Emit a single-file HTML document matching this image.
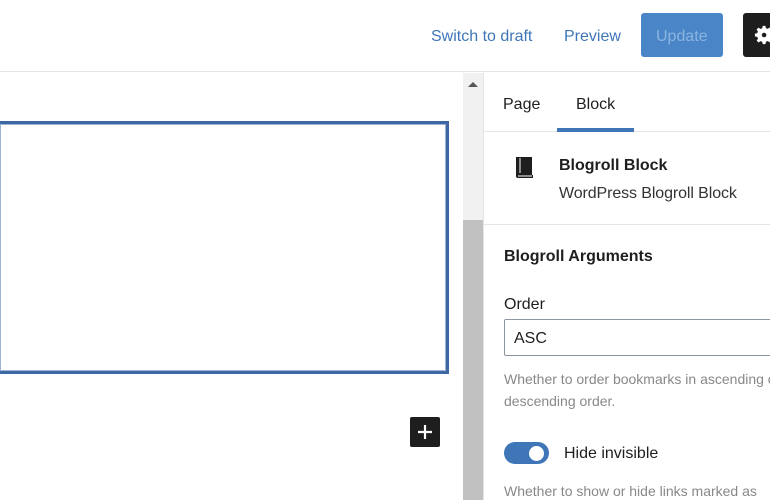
<!DOCTYPE html><html><head><style>
body{margin:0;width:770px;height:500px;overflow:hidden;background:#fff;font-family:"Liberation Sans",sans-serif;position:relative}
div,span{position:absolute;box-sizing:border-box}
.t{white-space:nowrap}
</style></head><body>
<div style="left:0;top:0;width:770px;height:72px;border-bottom:1px solid #e2e4e7"></div>
<span class="t" style="left:431px;top:28px;font-size:16px;color:#3f76b8">Switch to draft</span>
<span class="t" style="left:564px;top:28px;font-size:16px;color:#3f76b8">Preview</span>
<div style="left:641px;top:13px;width:82px;height:44px;background:#4a86c7;border-radius:3px"></div>
<span class="t" style="left:656px;top:28px;font-size:16px;color:#8ab4e0">Update</span>
<div style="left:743px;top:13px;width:40px;height:44px;background:#1e1e1e;border-radius:3px"></div>
<svg style="position:absolute;left:754px;top:24px" width="22" height="22" viewBox="0 0 24 24"><path fill="#fff" d="M12 8a4 4 0 1 0 0 8 4 4 0 0 0 0-8zm9 5.5v-3l-2.6-.5a7 7 0 0 0-.8-1.900l1.5-2.2-2.1-2.1-2.2 1.5a7 7 0 0 0-1.9-.8L12.5 2h-3l-.5 2.6a7 7 0 0 0-1.9.8L4.9 3.9 2.8 6l1.5 2.2a7 7 0 0 0-.8 1.9L1 10.5v3l2.6.5a7 7 0 0 0 .8 1.9l-1.5 2.2 2.1 2.1 2.2-1.5a7 7 0 0 0 1.9.8l.4 2.5h3l.5-2.6a7 7 0 0 0 1.9-.8l2.2 1.5 2.1-2.1-1.5-2.2a7 7 0 0 0 .8-1.9z"/><circle cx="11" cy="12" r="2.5" fill="#1e1e1e"/></svg>
<div style="left:-3px;top:121px;width:452px;height:253px;border:3px solid #3d68a4;box-shadow:inset 0 0 0 1px #9db3d3"></div>
<div style="left:410px;top:417px;width:30px;height:30px;background:#1e1e1e;border-radius:2px;display:flex;align-items:center;justify-content:center"><svg width="18" height="18" viewBox="0 0 18 18"><path d="M9 2v14M2 9h14" stroke="#fff" stroke-width="2.2"/></svg></div>
<div style="left:463px;top:73px;width:20px;height:427px;background:#f1f1f1"></div>
<div style="left:463px;top:220px;width:20px;height:280px;background:#c1c1c1"></div>
<div style="left:468px;top:82px;width:0;height:0;border-left:5px solid transparent;border-right:5px solid transparent;border-bottom:5px solid #555"></div>
<div style="left:483px;top:73px;width:1px;height:427px;background:#e2e4e7"></div>
<div style="left:484px;top:131px;width:286px;height:1px;background:#e2e4e7"></div>
<span class="t" style="left:503px;top:96px;font-size:16px;color:#1e1e1e">Page</span>
<span class="t" style="left:576px;top:96px;font-size:16px;color:#1e1e1e">Block</span>
<div style="left:557px;top:128px;width:77px;height:4px;background:#3f76b8"></div>
<svg style="position:absolute;left:513px;top:156px" width="22" height="24" viewBox="0 0 22 24"><path fill="#1e1e1e" d="M3 1h16v18H3z"/><path fill="#1e1e1e" d="M3 19h17v3H5a2 2 0 0 1-2-2z"/><path d="M5 20h14" stroke="#fff" stroke-width="1"/><path d="M7 2v15" stroke="#fff" stroke-width="1"/></svg>
<span class="t" style="left:559px;top:157px;font-size:16px;font-weight:bold;color:#1e1e1e">Blogroll Block</span>
<span class="t" style="left:559px;top:185px;font-size:16px;color:#333;letter-spacing:-0.1px">WordPress Blogroll Block</span>
<div style="left:484px;top:224px;width:286px;height:1px;background:#e2e4e7"></div>
<span class="t" style="left:504px;top:248px;font-size:16px;font-weight:bold;color:#1e1e1e">Blogroll Arguments</span>
<span class="t" style="left:504px;top:296px;font-size:16px;color:#1e1e1e">Order</span>
<div style="left:504px;top:319px;width:280px;height:37px;border:1px solid #8d96a0;border-radius:2px"></div>
<span class="t" style="left:514px;top:330px;font-size:16px;color:#1e1e1e">ASC</span>
<span class="t" style="left:504px;top:371px;font-size:14px;color:#888">Whether to order bookmarks in ascending or</span>
<span class="t" style="left:504px;top:393px;font-size:14px;color:#888">descending order.</span>
<div style="left:504px;top:442px;width:45px;height:22px;background:#3f76b8;border-radius:11px"></div>
<div style="left:529px;top:446px;width:15px;height:15px;background:#fff;border-radius:50%"></div>
<span class="t" style="left:564px;top:445px;font-size:16px;color:#1e1e1e">Hide invisible</span>
<span class="t" style="left:504px;top:483px;font-size:14px;color:#888">Whether to show or hide links marked as</span>
</body></html>
